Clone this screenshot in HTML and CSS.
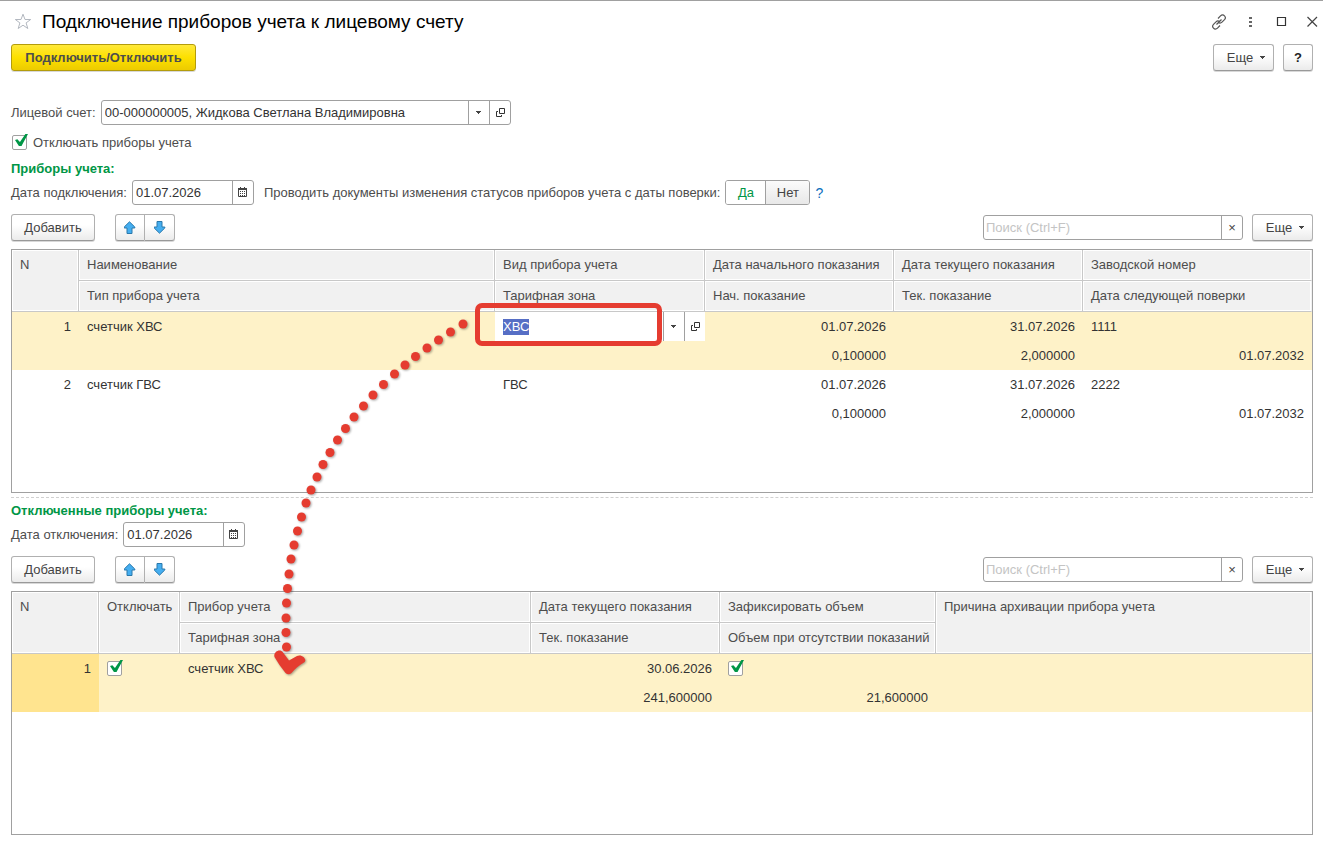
FILE: index.html
```
<!DOCTYPE html>
<html lang="ru">
<head>
    <meta charset="utf-8">
    <title>Подключение приборов учета к лицевому счету</title>
    <link rel="stylesheet" href="styles.css">
</head>
<body>

    <svg class="sprite" width="0" height="0" aria-hidden="true">
        <symbol id="open" viewBox="0 0 10 9">
            <path d="M4.500 .5h5v5h-5zM3 3.500H1.500v5h5V7" fill="none" stroke="#333"/>
        </symbol>
        <symbol id="caret" viewBox="0 0 6 3">
            <path d="M0 0h5v1H4v1H3v1H2V2H1V1H0z" fill="#444"/>
        </symbol>
        <symbol id="calendar" viewBox="0 0 10 11">
            <path d="M.5 1.500h8v8h-8z" fill="#fff" stroke="#444"/>
            <path d="M0 1h9v2H0zM2 0h1v2H2zM6 0h1v2H6z" fill="#444"/>
            <path d="M2 4.500h1m1 0h1m1 0h1M2 6.500h1m1 0h1m1 0h1M2 8.500h1m1 0h1m1 0h1" stroke="#444"/>
        </symbol>
        <symbol id="up" viewBox="0 0 12 13">
            <path d="M5.500 .8L10.800 6v1H8v5.500H3V7H.2V6z" fill="#45aef0" stroke="#2a78ab"/>
        </symbol>
        <symbol id="down" viewBox="0 0 12 13">
            <path d="M5.500 12.200L10.800 7V6H8V.5H3V6H.2v1z" fill="#45aef0" stroke="#2a78ab"/>
        </symbol>
    </svg>

    <div class="window">
        <header class="titlebar">
            <svg class="star" width="18" height="17" viewBox="0 0 18 17"><path d="M9 1.200l2 5.300h5.700l-4.600 3.400 1.700 5.600L9 12.200l-4.800 3.300 1.700-5.600-4.600-3.400H7z" fill="none" stroke="#b3b8c0"/></svg>
            <h1>Подключение приборов учета к лицевому счету</h1>
            <div class="window-icons">
                <svg width="16" height="16" viewBox="0 0 16 16" fill="none" stroke="#555" stroke-width="1.200"><path d="M7 4.500l2.500-2.600c1.300-1.300 2.900-1.300 4 0 1.100 1.100 1.100 2.600 0 3.800L11 8.200C10 9.200 8.500 9.300 7.500 8.600M9 11.500l-2.500 2.600c-1.300 1.300-2.900 1.300-4 0-1.100-1.100-1.100-2.600 0-3.800L5 7.800c1-1 2.500-1.100 3.500-.4M5.500 10.500l5-5"/></svg>
                <svg width="16" height="16" viewBox="0 0 16 16" fill="#666"><path d="M7 3h3v2H7zM7 7h3v2H7zM7 11h3v2H7z"/></svg>
                <svg width="16" height="16" viewBox="0 0 16 16"><path d="M4.500 3.500h8v8h-8z" fill="none" stroke="#333" stroke-width="1.200"/></svg>
                <svg width="16" height="16" viewBox="0 0 16 16"><path d="M3.500 3l9.500 9.500M13 3l-9.500 9.500" stroke="#444" stroke-width="1.200"/></svg>
            </div>
        </header>

        <div class="commands">
            <button class="btn primary">Подключить/Отключить</button>
            <div class="right">
                <button class="btn more">Еще <svg width="6" height="3"><use href="#caret"/></svg></button>
                <button class="btn help">?</button>
            </div>
        </div>

        <div class="row">
            <label for="account">Лицевой счет:</label>
            <div class="field account">
                <input id="account" type="text" value="00-000000005, Жидкова Светлана Владимировна">
                <button aria-label="Выбрать"><svg width="6" height="3"><use href="#caret"/></svg></button>
                <button aria-label="Открыть"><svg width="10" height="9"><use href="#open"/></svg></button>
            </div>
        </div>

        <div class="check-row">
            <input id="disconnect" type="checkbox" checked>
            <label for="disconnect">Отключать приборы учета</label>
        </div>

        <section>
            <h2>Приборы учета:</h2>
            <div class="row">
                <label for="dateOn">Дата подключения:</label>
                <div class="field date">
                    <input id="dateOn" type="text" value="01.07.2026">
                    <button aria-label="Календарь"><svg width="10" height="11"><use href="#calendar"/></svg></button>
                </div>
                <span class="status-label">Проводить документы изменения статусов приборов учета с даты поверки:</span>
                <div class="toggle">
                    <button class="on">Да</button>
                    <button>Нет</button>
                </div>
                <a class="hint" href="#">?</a>
            </div>
            <div class="toolbar">
                <button class="btn add">Добавить</button>
                <div class="btn-group">
                    <button class="btn" aria-label="Вверх"><svg width="12" height="13"><use href="#up"/></svg></button>
                    <button class="btn" aria-label="Вниз"><svg width="12" height="13"><use href="#down"/></svg></button>
                </div>
                <div class="right">
                    <div class="field search">
                        <input type="text" placeholder="Поиск (Ctrl+F)" aria-label="Поиск">
                        <button aria-label="Очистить">×</button>
                    </div>
                    <button class="btn more">Еще <svg width="6" height="3"><use href="#caret"/></svg></button>
                </div>
            </div>
            <div class="grid">
                <table>
                    <colgroup>
                        <col class="c-num"><col><col class="c-kind"><col class="c-date"><col class="c-date"><col class="c-serial">
                    </colgroup>
                    <thead>
                        <tr>
                            <th rowspan="2">N</th>
                            <th>Наименование</th>
                            <th>Вид прибора учета</th>
                            <th>Дата начального показания</th>
                            <th>Дата текущего показания</th>
                            <th>Заводской номер</th>
                        </tr>
                        <tr>
                            <th>Тип прибора учета</th>
                            <th>Тарифная зона</th>
                            <th>Нач. показание</th>
                            <th>Тек. показание</th>
                            <th>Дата следующей поверки</th>
                        </tr>
                    </thead>
                    <tbody class="current">
                        <tr>
                            <td class="num" rowspan="2">1</td>
                            <td>счетчик ХВС</td>
                            <td class="editing">
                                <div class="cell-edit">
                                    <input id="kind" type="text" value="ХВС" aria-label="Вид прибора учета">
                                    <button aria-label="Выбрать"><svg width="6" height="3"><use href="#caret"/></svg></button>
                                    <button aria-label="Открыть"><svg width="10" height="9"><use href="#open"/></svg></button>
                                </div>
                                <div class="mark"></div>
                            </td>
                            <td class="num">01.07.2026</td>
                            <td class="num">31.07.2026</td>
                            <td>1111</td>
                        </tr>
                        <tr>
                            <td></td>
                            <td></td>
                            <td class="num">0,100000</td>
                            <td class="num">2,000000</td>
                            <td class="num">01.07.2032</td>
                        </tr>
                    </tbody>
                    <tbody>
                        <tr>
                            <td class="num" rowspan="2">2</td>
                            <td>счетчик ГВС</td>
                            <td>ГВС</td>
                            <td class="num">01.07.2026</td>
                            <td class="num">31.07.2026</td>
                            <td>2222</td>
                        </tr>
                        <tr>
                            <td></td>
                            <td></td>
                            <td class="num">0,100000</td>
                            <td class="num">2,000000</td>
                            <td class="num">01.07.2032</td>
                        </tr>
                    </tbody>
                </table>
            </div>
        </section>

        <section class="disconnected">
            <h2>Отключенные приборы учета:</h2>
            <div class="row">
                <label for="dateOff">Дата отключения:</label>
                <div class="field date">
                    <input id="dateOff" type="text" value="01.07.2026">
                    <button aria-label="Календарь"><svg width="10" height="11"><use href="#calendar"/></svg></button>
                </div>
            </div>
            <div class="toolbar">
                <button class="btn add">Добавить</button>
                <div class="btn-group">
                    <button class="btn" aria-label="Вверх"><svg width="12" height="13"><use href="#up"/></svg></button>
                    <button class="btn" aria-label="Вниз"><svg width="12" height="13"><use href="#down"/></svg></button>
                </div>
                <div class="right">
                    <div class="field search">
                        <input type="text" placeholder="Поиск (Ctrl+F)" aria-label="Поиск">
                        <button aria-label="Очистить">×</button>
                    </div>
                    <button class="btn more">Еще <svg width="6" height="3"><use href="#caret"/></svg></button>
                </div>
            </div>
            <div class="grid">
                <table>
                    <colgroup>
                        <col class="c-num-wide"><col class="c-check"><col class="c-device"><col class="c-date"><col class="c-volume"><col>
                    </colgroup>
                    <thead>
                        <tr>
                            <th rowspan="2">N</th>
                            <th rowspan="2">Отключать</th>
                            <th>Прибор учета</th>
                            <th>Дата текущего показания</th>
                            <th>Зафиксировать объем</th>
                            <th rowspan="2">Причина архивации прибора учета</th>
                        </tr>
                        <tr>
                            <th>Тарифная зона</th>
                            <th>Тек. показание</th>
                            <th>Объем при отсутствии показаний</th>
                        </tr>
                    </thead>
                    <tbody class="current">
                        <tr>
                            <td class="num active" rowspan="2">1</td>
                            <td><input type="checkbox" checked aria-label="Отключать"></td>
                            <td>счетчик ХВС</td>
                            <td class="num">30.06.2026</td>
                            <td><input type="checkbox" checked aria-label="Зафиксировать объем"></td>
                            <td></td>
                        </tr>
                        <tr>
                            <td></td>
                            <td></td>
                            <td class="num">241,600000</td>
                            <td class="num">21,600000</td>
                            <td></td>
                        </tr>
                    </tbody>
                </table>
            </div>
        </section>

        <!-- dotted arrow from the meter kind to the disconnected meter -->
        <svg class="arrow" width="480" height="690" viewBox="0 0 480 690" fill="#e53c30">
            <circle cx="463" cy="324" r="4.500"/>
            <circle cx="450.500" cy="332" r="4.500"/>
            <circle cx="438.500" cy="340" r="4.500"/>
            <circle cx="427" cy="348" r="4.500"/>
            <circle cx="415.500" cy="356.500" r="4.500"/>
            <circle cx="405" cy="365" r="4.500"/>
            <circle cx="394.500" cy="374" r="4.500"/>
            <circle cx="383.500" cy="384.500" r="4.500"/>
            <circle cx="373" cy="395" r="4.500"/>
            <circle cx="363.500" cy="406" r="4.500"/>
            <circle cx="354" cy="417" r="4.500"/>
            <circle cx="345.500" cy="428.500" r="4.500"/>
            <circle cx="337.500" cy="440" r="4.500"/>
            <circle cx="330" cy="452.500" r="4.500"/>
            <circle cx="323" cy="464.500" r="4.500"/>
            <circle cx="317" cy="477" r="4.500"/>
            <circle cx="311" cy="490" r="4.500"/>
            <circle cx="306" cy="503" r="4.500"/>
            <circle cx="301.500" cy="517" r="4.500"/>
            <circle cx="297.500" cy="531" r="4.500"/>
            <circle cx="294" cy="545" r="4.500"/>
            <circle cx="291" cy="559" r="4.500"/>
            <circle cx="289" cy="574" r="4.500"/>
            <circle cx="287.500" cy="588.500" r="4.500"/>
            <circle cx="286.500" cy="603" r="4.500"/>
            <circle cx="286" cy="618" r="4.500"/>
            <circle cx="286" cy="632.500" r="4.500"/>
            <circle cx="286.500" cy="647" r="4.500"/>
            <path d="M274.500 657C273 652 280 648 283 652.500L289 660.500 297 656C302 653.500 308 660 304 662.500 299 665 295 669 291.500 673Q288.500 675.500 285.500 673 279 665 274.500 657z"/>
        </svg>
    </div>

    <script>
        // The meter kind opens in edit mode with its value selected
        const kind = document.getElementById('kind');
        kind.focus();
        kind.select();
    </script>

</body>
</html>
```
FILE: styles.css
```
* {
    box-sizing: border-box;
}
body {
    margin: 0;
    background: #fff;
    color: #4d4d4d;
    font-family: "Liberation Sans", Arial, sans-serif;
    font-size: 13px;
    line-height: 16px;
}
button, input {
    font: inherit;
    color: #444;
}
svg {
    display: block;
    flex: none;
}
.sprite {
    position: absolute;
}
.window {
    position: relative;
    padding: 0 10px 10px 11px;
    border-top: 1px solid #a0a0a0;
}
.titlebar {
    display: flex;
    align-items: center;
    height: 41px;
    margin-bottom: 2px;
    padding-left: 3px;
}
h1 {
    margin: 0 0 0 10px;
    font-size: 19px;
    font-weight: normal;
    line-height: 24px;
    color: #000;
}
.window-icons {
    display: flex;
    align-items: center;
    gap: 15px;
    margin: 0 -7px 0 auto;
}
.commands, .toolbar {
    display: flex;
    align-items: center;
}
.commands {
    margin-bottom: 29px;
}
.right {
    display: flex;
    align-items: center;
    gap: 9px;
    margin-left: auto;
}
.btn {
    display: flex;
    align-items: center;
    justify-content: center;
    height: 27px;
    padding: 0;
    border: 1px solid #b0b0b0;
    border-bottom-color: #999;
    border-radius: 3px;
    background: linear-gradient(#fff 40%, #ebebeb);
    box-shadow: 0 1px 0 #d8d8d8;
}
.primary {
    width: 185px;
    border-color: #b39c0c;
    background: linear-gradient(#ffe93a, #fde000 50%, #eccb00);
    font-weight: bold;
    color: #4d4d4d;
}
.more {
    width: 61px;
    gap: 7px;
    padding-left: 6px;
}
.help {
    width: 30px;
    font-weight: bold;
    color: #222;
}
.row {
    display: flex;
    align-items: center;
    gap: 5px;
}
.field {
    display: flex;
    height: 25px;
    border: 1px solid #a0a0a0;
    border-radius: 3px;
    background: #fff;
}
.field input {
    flex: 1;
    min-width: 0;
    padding: 0 3px;
    border: 0;
    background: none;
    color: #333;
    outline: none;
}
.field input::placeholder {
    color: #c4c4c4;
}
.field button {
    display: flex;
    align-items: center;
    justify-content: center;
    width: 21px;
    padding: 0;
    border: 0;
    border-left: 1px solid #a0a0a0;
    background: none;
}
.account {
    width: 410px;
}
.date {
    width: 122px;
}
.search {
    width: 260px;
}
.search input {
    padding: 0 2px;
}
.check-row {
    display: flex;
    align-items: center;
    gap: 6px;
    height: 15px;
    margin: 10px 0 11px;
    padding-left: 1px;
}
input[type="checkbox"] {
    appearance: none;
    position: relative;
    display: block;
    width: 15px;
    height: 15px;
    margin: 0;
    border: 1px solid #a0a0a0;
    border-radius: 2px;
    background: #fff;
}
input[type="checkbox"]:checked::before {
    content: "";
    position: absolute;
    left: 2px;
    top: -2px;
    width: 13px;
    height: 12px;
    background: #009646;
    clip-path: polygon(0 50%, 18% 44%, 38% 66%, 80% 0, 100% 0, 50% 100%, 30% 100%);
}
h2 {
    margin: 0 0 3px;
    font-size: 13px;
    line-height: 16px;
    color: #009646;
}
.status-label {
    margin-left: 5px;
}
.toggle {
    display: flex;
    width: 85px;
    height: 25px;
    border: 1px solid #a0a0a0;
    border-radius: 3px;
    overflow: hidden;
}
.toggle button {
    flex: 1;
    padding: 0;
    border: 0;
    background: linear-gradient(#fbfbfb, #e8e8e8);
}
.toggle .on {
    flex: none;
    width: 40px;
    border-right: 1px solid #a0a0a0;
    background: #fff;
    color: #009646;
}
.hint {
    font-size: 14px;
    color: #0a6ebd;
    text-decoration: none;
}
.toolbar {
    margin: 9px 0 8px;
}
.add {
    width: 84px;
}
.btn-group {
    display: flex;
    margin-left: 20px;
}
.btn-group .btn {
    width: 30px;
}
.btn-group .btn:first-child {
    border-radius: 3px 0 0 3px;
}
.btn-group .btn:last-child {
    border-left: 0;
    border-radius: 0 3px 3px 0;
}
.grid {
    min-height: 244px;
    border: 1px solid #a0a0a0;
}
table {
    width: 100%;
    table-layout: fixed;
    border-collapse: separate;
    border-spacing: 0;
}
.c-num {
    width: 67px;
}
.c-num-wide {
    width: 87px;
}
.c-kind {
    width: 210px;
}
.c-date {
    width: 189px;
}
.c-serial {
    width: 229px;
}
.c-check {
    width: 81px;
}
.c-device {
    width: 351px;
}
.c-volume {
    width: 216px;
}
th, td {
    padding: 0 8px;
    text-align: left;
    vertical-align: top;
    white-space: nowrap;
}
th {
    height: 31px;
    padding-top: 7px;
    border-right: 1px solid #c8c8c8;
    border-bottom: 1px solid #c8c8c8;
    background: #f1f1f1;
    box-shadow: inset 0 0 0 1px #fff;
    font-weight: normal;
}
tr:first-child th:last-child, tr:last-child th:last-child {
    border-right-color: #f1f1f1;
}
.disconnected tr:last-child th:last-child {
    border-right-color: #c8c8c8;
}
td {
    height: 29px;
    padding-top: 7px;
    color: #333;
}
td.num {
    text-align: right;
}
.current td {
    background: #fef2c8;
}
.current td.active {
    background: #ffe48f;
}
td.editing {
    position: relative;
    padding: 0;
}
.cell-edit {
    display: flex;
    height: 29px;
    background: #fff;
}
.cell-edit input {
    flex: 1;
    min-width: 0;
    padding: 0 8px;
    border: 0;
    background: none;
    outline: none;
}
.cell-edit input::selection {
    background: rgba(84, 108, 196, 0.99);
    color: #fff;
}
.cell-edit button {
    display: flex;
    align-items: center;
    justify-content: center;
    width: 21px;
    padding: 0;
    border: 0;
    border-left: 1px solid #a0a0a0;
    background: none;
}
.mark {
    position: absolute;
    left: -20px;
    top: -9px;
    width: 187px;
    height: 43px;
    border: 5px solid #e53c30;
    border-radius: 7px;
    pointer-events: none;
}
.disconnected {
    margin-top: 4px;
    padding-top: 5px;
    border-top: 1px dashed #d0d0d0;
}
.arrow {
    position: absolute;
    left: 0;
    top: -1px;
    pointer-events: none;
    filter: drop-shadow(1px 1px 1px rgba(0, 0, 0, 0.35));
}
```
